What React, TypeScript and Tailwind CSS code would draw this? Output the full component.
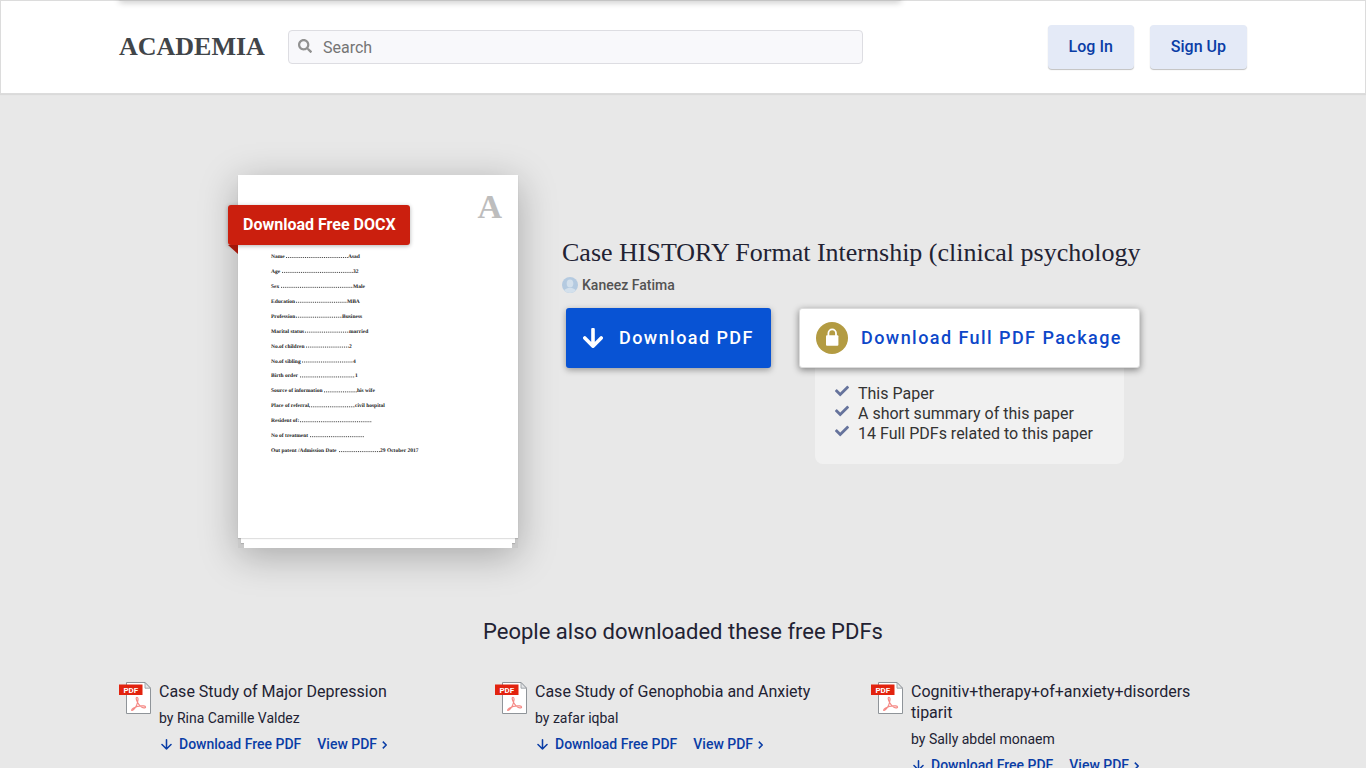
import React from "react";
import { FaCheck, FaSearch } from "react-icons/fa";

type DocumentLine = { label: string; from: number; to: number; value: string };

const documentLines: DocumentLine[] = [
  { label: "Name", from: 48, to: 110, value: "Asad" },
  { label: "Age", from: 44, to: 115, value: "32" },
  { label: "Sex", from: 43, to: 115, value: "Male" },
  { label: "Education", from: 58, to: 109, value: "MBA" },
  { label: "Profession", from: 58, to: 104, value: "Business" },
  { label: "Marital status", from: 67, to: 111, value: "married" },
  { label: "No.of children", from: 68, to: 111, value: "2" },
  { label: "No.of sibling", from: 64, to: 115, value: "4" },
  { label: "Birth order", from: 62, to: 117, value: "1" },
  { label: "Source of information", from: 86, to: 119, value: "his wife" },
  { label: "Place of referral", from: 71, to: 117, value: "civil hospital" },
  { label: "Resident  of:", from: 62, to: 134, value: "" },
  { label: "No of treatment", from: 72, to: 126, value: "" },
  { label: "Out patent /Admission Date", from: 101, to: 142, value: "29 October 2017" },
];

const packageItems = [
  "This Paper",
  "A short summary of this paper",
  "14 Full PDFs related to this paper",
];

const papers = [
  { title: "Case Study of Major Depression", author: "Rina Camille Valdez" },
  { title: "Case Study of Genophobia and Anxiety", author: "zafar iqbal" },
  { title: "Cognitiv+therapy+of+anxiety+disorders tiparit", author: "Sally abdel monaem" },
];

function ArrowDown({ className, width }: { className: string; width: number }) {
  return (
    <svg viewBox="0 0 20 20" className={className} aria-hidden="true">
      <path
        d="M10 1.5V18M1.8 10 10 18.2 18.2 10"
        fill="none"
        stroke="currentColor"
        strokeWidth={width}
        strokeLinecap="round"
        strokeLinejoin="round"
      />
    </svg>
  );
}

function LockBadge() {
  return (
    <svg viewBox="0 0 32 32" className="size-8 shrink-0" aria-hidden="true">
      <circle cx="16" cy="16" r="16" fill="#b39b42" />
      <rect x="10" y="13.2" width="12.4" height="10.6" rx="1" fill="#fff" />
      <path d="M12.400 14V11.200a3.800 3.800 0 0 1 7.600 0V14" fill="none" stroke="#fff" strokeWidth="1.800" />
    </svg>
  );
}

function Avatar() {
  return (
    <svg viewBox="0 0 16 16" className="size-4 shrink-0" aria-hidden="true">
      <defs>
        <clipPath id="avatar-clip">
          <circle cx="8" cy="8" r="8" />
        </clipPath>
      </defs>
      <g clipPath="url(#avatar-clip)">
        <rect width="16" height="16" fill="#b4cae0" />
        <ellipse cx="8" cy="6.6" rx="3.3" ry="4" fill="#d3e0ec" />
        <path d="M1.5 16c.3-3.600 2.500-5 6.500-5s6.200 1.400 6.500 5z" fill="#d3e0ec" />
      </g>
    </svg>
  );
}

function PdfIcon() {
  return (
    <svg viewBox="0 0 32 32" className="mt-px size-8 shrink-0" aria-hidden="true">
      <path d="M7.500.5H26l5.500 5.700v25.300h-24z" fill="#fff" stroke="#8f9499" />
      <path d="M26 .5v5.700h5.500z" fill="#e4e6e8" stroke="#8f9499" strokeWidth=".8" />
      <rect x="0" y="2.500" width="23.500" height="10.500" fill="#e2230f" />
      <text
        x="11.800"
        y="10.700"
        textAnchor="middle"
        fill="#fff"
        fontFamily="Roboto, sans-serif"
        fontWeight="700"
        fontSize="8"
      >
        PDF
      </text>
      <path
        d="M18.300 15.500c-1.700-.5-1.300 2.200.3 5 1.700 3 4.200 5.200 6.300 5.400 2.200.2 2.200-1.700-.2-2-3.700-.4-7.700.6-10.500 2.300-2.300 1.500-1.700 2.900-.2 1.900 2-1.500 4.300-6.200 4.900-9.600.3-1.800.1-2.800-.6-3z"
        fill="none"
        stroke="#f58a86"
        strokeWidth="1.200"
      />
    </svg>
  );
}

function Header() {
  return (
    <header className="relative border border-[#dcdcdc] bg-white shadow-[0_1px_1px_rgba(0,0,0,0.06)]">
      <div className="absolute inset-x-0 -top-px h-5 overflow-hidden">
        <div className="mx-auto max-w-[1128px]">
          <div className="-mt-[3px] h-1 w-[782px] max-w-full rounded-sm bg-[#c4c4c4] shadow-[0_1px_6px_rgba(0,0,0,0.3)]" />
        </div>
      </div>
      <div className="relative mx-auto flex h-[92px] max-w-[1128px] items-center">
        <a
          href="#home"
          className="w-[169px] shrink-0 font-['Liberation_Serif',serif] text-[26px] leading-8 font-bold text-[#414549]"
        >
          ACADEMIA
        </a>
        <form role="search" className="flex h-[34px] w-[575px] items-center rounded border border-[#dddde2] bg-[#f8f8fb] px-[9px]">
          <label htmlFor="search" className="mb-0.5 text-[#919191]" aria-label="Search">
            <FaSearch size={14} />
          </label>
          <input
            id="search"
            type="search"
            placeholder="Search"
            className="ml-[11px] w-full bg-transparent pt-0.5 text-base text-[#222233] outline-none placeholder:text-[#757575]"
          />
        </form>
        <div className="ml-auto flex gap-4 text-base font-medium text-[#0a3da6]">
          <button type="button" className="h-11 rounded bg-[#e4eaf7] px-[21px] shadow-[0_1px_1px_rgba(0,0,0,0.25)]">
            Log In
          </button>
          <button type="button" className="h-11 rounded bg-[#e4eaf7] px-[21px] shadow-[0_1px_1px_rgba(0,0,0,0.25)]">
            Sign Up
          </button>
        </div>
      </div>
    </header>
  );
}

function ScannedPage() {
  return (
    <svg viewBox="0 0 280 363" className="block w-full" role="img" aria-label="First page of the document">
      <g
        fill="#222"
        fontFamily="'Liberation Serif', serif"
        fontWeight="700"
        fontSize="5.5"
        textRendering="geometricPrecision"
      >
        {documentLines.map((line, index) => {
          const y = 83 + index * 14.93;
          return (
            <g key={line.label}>
              <text x="33" y={y}>
                {line.label}
              </text>
              <path d={`M${line.from} ${y - 0.5}H${line.to}`} stroke="#333" strokeWidth="0.9" strokeDasharray="1 0.9" />
              {line.value && (
                <text x={line.to} y={y}>
                  {line.value}
                </text>
              )}
            </g>
          );
        })}
      </g>
    </svg>
  );
}

function DocumentPreview() {
  return (
    <div className="flex w-[280px] shrink-0 flex-col items-center self-start bg-[#c9c9c9] shadow-[0_8px_36px_rgba(0,0,0,0.28)]">
      <div className="relative z-10 w-full bg-white shadow-[0_1px_1px_rgba(0,0,0,0.12)]">
        <ScannedPage />
        <span className="absolute top-3.5 right-4 font-['Liberation_Serif',serif] text-[34px] leading-9 font-bold text-[#bdbdbd]">
          A
        </span>
        <a
          href="#docx"
          className="absolute top-[30px] -left-2.5 flex h-10 items-center rounded-[3px] bg-[#cb1f0e] pr-3.5 pl-[15px] text-base font-bold whitespace-nowrap text-white shadow-[0_1px_4px_rgba(0,0,0,0.3)]"
        >
          Download Free DOCX
        </a>
        <svg viewBox="0 0 10 9" className="absolute top-[70px] -left-2.5 h-[9px] w-2.5" aria-hidden="true">
          <path d="M0 0h10v9z" fill="#a3170a" />
        </svg>
      </div>
      <div className="h-[5px] w-[274px] bg-white shadow-[0_1px_1px_rgba(0,0,0,0.12)]" />
      <div className="h-[5px] w-[268px] bg-white" />
    </div>
  );
}

function PaperCard({ title, author }: { title: string; author: string }) {
  return (
    <article className="flex gap-2 pr-8">
      <PdfIcon />
      <div>
        <h3 className="text-base leading-[21px]">{title}</h3>
        <p className="mt-1.5 text-sm leading-5">by {author}</p>
        <div className="mt-1.5 flex gap-4 text-sm leading-5 font-medium text-[#0a3da6]">
          <a href="#download" className="flex items-center">
            <ArrowDown className="mt-px mr-[7px] ml-0.5 size-[11px]" width={2.8} />
            Download Free PDF
          </a>
          <a href="#view" className="flex items-center">
            View PDF
            <svg viewBox="0 0 5 8" className="mt-px ml-[5px] h-2 w-[5px]" aria-hidden="true">
              <path d="M.8.6 4.200 4 .8 7.400" fill="none" stroke="currentColor" strokeWidth="1.500" />
            </svg>
          </a>
        </div>
      </div>
    </article>
  );
}

export default function App() {
  return (
    <div className="min-h-screen bg-[#e8e8e8] font-[Roboto,sans-serif] text-[#222233]">
      <Header />
      <main className="mx-auto max-w-[1128px]">
        <section className="flex gap-11 pt-[81px] pl-[119px]">
          <DocumentPreview />
          <div className="pt-[62px]">
            <h1 className="font-['Liberation_Serif',serif] text-[26px] leading-8 whitespace-nowrap">
              Case HISTORY Format Internship (clinical psychology
            </h1>
            <a href="#author" className="mt-1.5 flex items-center gap-1 text-sm leading-5 font-medium text-[#535353]">
              <Avatar />
              Kaneez Fatima
            </a>
            <div className="mt-[13px] ml-1 flex items-start gap-7 text-lg font-medium tracking-[0.08em]">
              <button
                type="button"
                className="flex h-[60px] w-[205px] items-center rounded-[3px] bg-[#0853d4] pl-[17px] whitespace-nowrap text-white shadow-[0_2px_6px_rgba(0,0,0,0.35)]"
              >
                <ArrowDown className="mr-4 size-5" width={3.6} />
                Download PDF
              </button>
              <div>
                <button
                  type="button"
                  className="relative flex h-[60px] w-[341px] items-center gap-[13px] rounded-[3px] border border-[#dcdcdc] bg-white pl-4 whitespace-nowrap text-[#0d47c9] shadow-[0_2px_7px_rgba(0,0,0,0.45)]"
                >
                  <LockBadge />
                  Download Full PDF Package
                </button>
                <ul className="mx-4 rounded-b-lg bg-[#f1f1f1] pt-4 pb-5 pl-5 text-base leading-5 font-normal tracking-normal text-[#333]">
                  {packageItems.map((item) => (
                    <li key={item} className="flex gap-[9px]">
                      <FaCheck size={14} className="text-[#66739c]" aria-hidden="true" />
                      {item}
                    </li>
                  ))}
                </ul>
              </div>
            </div>
          </div>
        </section>
        <section className="pt-[68px] pb-6">
          <h2 className="text-center text-[22px] leading-8">People also downloaded these free PDFs</h2>
          <div className="mt-[33px] grid grid-cols-3">
            {papers.map((paper) => (
              <PaperCard key={paper.title} title={paper.title} author={paper.author} />
            ))}
          </div>
        </section>
      </main>
    </div>
  );
}
